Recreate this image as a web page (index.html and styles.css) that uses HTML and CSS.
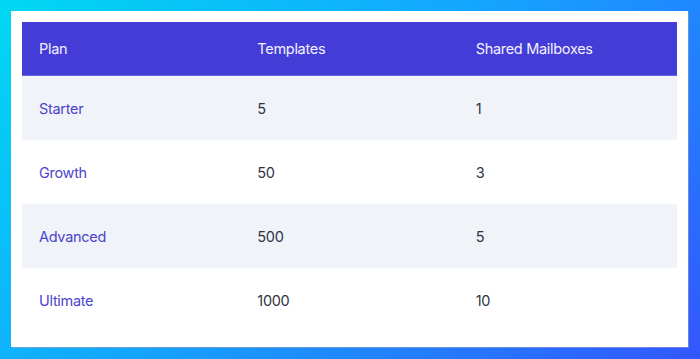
FILE: index.html
```html
<!DOCTYPE html>
<html>
<head>
<meta charset="utf-8">
<link rel="stylesheet" href="styles.css">
</head>
<body>
<div class="card">
  <table class="plans">
    <thead>
      <tr><th>Plan</th><th>Templates</th><th>Shared Mailboxes</th></tr>
    </thead>
    <tbody>
      <tr class="alt"><td class="plan">Starter</td><td>5</td><td>1</td></tr>
      <tr><td class="plan">Growth</td><td>50</td><td>3</td></tr>
      <tr class="alt"><td class="plan">Advanced</td><td>500</td><td>5</td></tr>
      <tr><td class="plan">Ultimate</td><td>1000</td><td>10</td></tr>
    </tbody>
  </table>
</div>
</body>
</html>
```

FILE: styles.css
```css
html, body {
  margin: 0;
  padding: 0;
}
body {
  width: 700px;
  height: 359px;
  box-sizing: border-box;
  padding: 11px 12px 12px 11px;
  background: linear-gradient(135deg, #00d8f2 0%, #14a6ff 45%, #3356ff 100%);
  font-family: Inter, "Noto Sans", sans-serif;
}
.card {
  background: #ffffff;
  height: 336px;
  box-sizing: border-box;
  padding: 11px 11px 15px 11px;
  box-shadow: 1px 1px 0 rgba(150, 160, 190, 0.6);
}
.plans {
  width: 100%;
  border-collapse: collapse;
  table-layout: fixed;
  font-size: 14.5px;
  letter-spacing: -0.3px;
}
.plans th {
  background: #443cd7;
  color: #f2f1ff;
  font-weight: 400;
  text-align: left;
  height: 53px;
  padding: 0 17px;
  border-bottom: 1px solid #6a63e3;
}
.plans td {
  height: 64px;
  padding: 0 17px;
  color: #2e3445;
}
.plans td.plan {
  color: #4c44cc;
}
.plans tr.alt td {
  background: #f0f3f8;
}
```
